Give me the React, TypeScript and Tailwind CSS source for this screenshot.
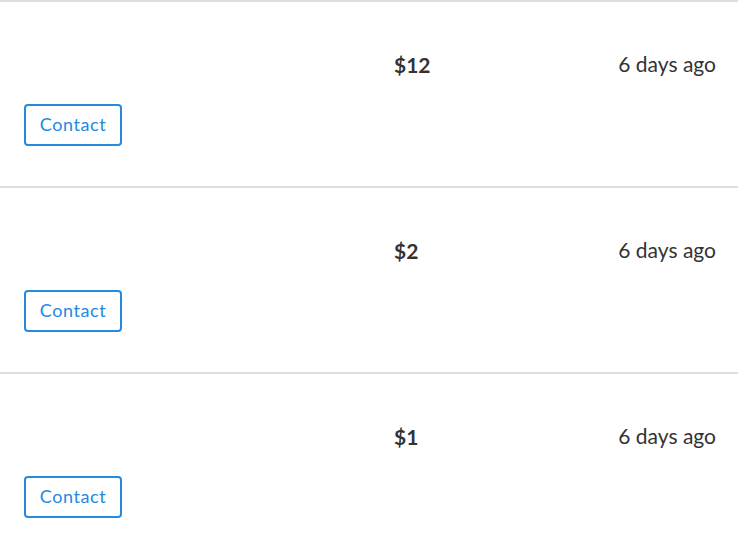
const rows = [
  { price: "$12", when: "6 days ago" },
  { price: "$2", when: "6 days ago" },
  { price: "$1", when: "6 days ago" },
];

function Row({ price, when }: { price: string; when: string }) {
  return (
    <div className="border-t-2 border-[#dedede] pl-6 pr-[22px] pt-[50px] pb-[40px]">
      <div className="flex items-center h-[25px] text-[21px] leading-[25px] text-[#333]">
        <div className="w-[370px]" />
        <div className="font-bold">{price}</div>
        <div className="ml-auto pb-[2px]">{when}</div>
      </div>
      <button className="mt-[27px] h-[42px] w-[98px] rounded-[4px] border-2 border-[#2589e0] bg-white pb-[3px] text-[18px] leading-none text-[#2589e0] tracking-[0.6px]">
        Contact
      </button>
    </div>
  );
}

export default function App() {
  return (
    <div className="w-[738px] h-[552px] overflow-hidden bg-white font-['Lato','Noto_Sans',sans-serif]">
      {rows.map((r, i) => (
        <Row key={i} price={r.price} when={r.when} />
      ))}
    </div>
  );
}
